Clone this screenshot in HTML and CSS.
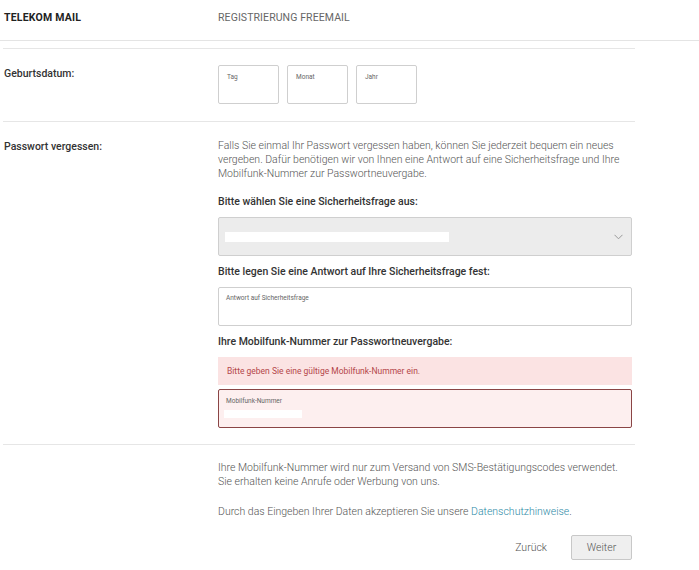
FILE: index.html
```html
<!DOCTYPE html>
<html lang="de">
<head>
<meta charset="utf-8">
<title>Registrierung Freemail</title>
<link rel="stylesheet" href="styles.css">
</head>
<body>
<header class="topbar">
  <div class="brand">TELEKOM MAIL</div>
  <div class="pagetitle">REGISTRIERUNG FREEMAIL</div>
</header>
<main class="form">
  <section class="row row-date">
    <div class="label">Geburtsdatum:</div>
    <div class="field">
      <div class="dates">
        <div class="box date"><span class="ph">Tag</span></div>
        <div class="box date"><span class="ph">Monat</span></div>
        <div class="box date"><span class="ph">Jahr</span></div>
      </div>
    </div>
  </section>
  <section class="row row-pw">
    <div class="label">Passwort vergessen:</div>
    <div class="field">
      <p class="intro">Falls Sie einmal Ihr Passwort vergessen haben, können Sie jederzeit bequem ein neues vergeben. Dafür benötigen wir von Ihnen eine Antwort auf eine Sicherheitsfrage und Ihre Mobilfunk-Nummer zur Passwortneuvergabe.</p>
      <h3 class="qlabel q1">Bitte wählen Sie eine Sicherheitsfrage aus:</h3>
      <div class="box select">
        <span class="redact redact-q"></span>
        <svg class="chev" width="9" height="6" viewBox="0 0 9 6"><path d="M0.5 0.8 L4.5 4.8 L8.5 0.8" fill="none" stroke="#999" stroke-width="1"/></svg>
      </div>
      <h3 class="qlabel">Bitte legen Sie eine Antwort auf Ihre Sicherheitsfrage fest:</h3>
      <div class="box input"><span class="ph">Antwort auf Sicherheitsfrage</span></div>
      <h3 class="qlabel">Ihre Mobilfunk-Nummer zur Passwortneuvergabe:</h3>
      <div class="error">Bitte geben Sie eine gültige Mobilfunk-Nummer ein.</div>
      <div class="box input invalid"><span class="ph">Mobilfunk-Nummer</span><span class="redact redact-num"></span></div>
    </div>
  </section>
  <section class="row row-foot">
    <div class="label"></div>
    <div class="field">
      <p class="note">Ihre Mobilfunk-Nummer wird nur zum Versand von SMS-Bestätigungscodes verwendet. Sie erhalten keine Anrufe oder Werbung von uns.</p>
      <p class="note privacy">Durch das Eingeben Ihrer Daten akzeptieren Sie unsere <a href="#">Datenschutzhinweise</a>.</p>
      <div class="actions">
        <button class="btn-link" type="button">Zurück</button>
        <button class="btn" type="button">Weiter</button>
      </div>
    </div>
  </section>
</main>
</body>
</html>
```
FILE: styles.css
```css
* { box-sizing: border-box; }
html, body { margin: 0; padding: 0; background: #fff; }
body {
  font-family: Roboto, "Liberation Sans", Arial, sans-serif;
  color: #333;
  width: 699px;
}
.topbar {
  display: grid;
  grid-template-columns: 218px 1fr;
  height: 41px;
  border-bottom: 1px solid #e4e4e4;
  align-items: start;
  padding-top: 11px;
}
.brand {
  padding-left: 4px;
  font-size: 10.5px;
  font-weight: 700;
  letter-spacing: 0.2px;
  color: #222;
}
.pagetitle {
  font-size: 10.5px;
  color: #666;
  letter-spacing: 0.1px;
}
.form {
  width: 632px;
  margin-left: 3px;
  margin-top: 7px;
}
.row {
  display: grid;
  grid-template-columns: 215px 414px;
  border-top: 1px solid #e6e6e6;
}
.label {
  padding-left: 1px;
  font-size: 10.5px;
  color: #333;
  font-weight: 500;
}
.row-date { padding: 16px 0 17px; }
.row-date .label { padding-top: 2px; }
.dates { display: flex; gap: 8px; }
.box {
  border: 1px solid #cfcfcf;
  border-radius: 2px;
  background: #fff;
  position: relative;
}
.date { width: 61px; height: 39px; padding: 7px 8px; }
.ph {
  display: block;
  font-size: 6.5px;
  color: #666;
  line-height: 8px;
}
.row-pw { padding: 17px 0 16px; }
.row-pw .label { padding-top: 1px; }
.intro {
  margin: 0;
  font-size: 10.5px;
  line-height: 14px;
  color: #555;
  font-weight: 300;
}
.qlabel {
  margin: 0;
  font-size: 10.5px;
  font-weight: 500;
  color: #333;
  line-height: 14px;
  padding: 9px 0 8px;
}
.q1 { padding-top: 14px; }
.select {
  height: 39px;
  background: #ececec;
  display: flex;
  align-items: center;
  justify-content: space-between;
  padding: 0 8px 0 6px;
}
.redact { display: block; background: #fff; }
.redact-q { width: 224px; height: 10px; }
.input { height: 39px; padding: 6px 7px; }
.error {
  height: 28px;
  background: #fbe3e3;
  color: #b4464a;
  font-size: 8.5px;
  padding: 9px 9px;
  margin-bottom: 4px;
}
.invalid {
  background: #fdefef;
  border-color: #8a4545;
  padding: 7px 7px;
}
.redact-num { width: 78px; height: 8px; margin-top: 5px; margin-left: -2px; }
.row-foot { padding: 16px 0 0; }
.note {
  margin: 0;
  font-size: 10.5px;
  line-height: 14px;
  color: #555;
  font-weight: 300;
}
.privacy { margin-top: 16px; }
.privacy a { color: #2a8aa6; text-decoration: none; }
.actions {
  display: flex;
  justify-content: flex-end;
  align-items: center;
  gap: 24px;
  margin-top: 16px;
}
.btn-link {
  background: none;
  border: 0;
  padding: 0;
  font-family: inherit;
  font-size: 10.5px;
  font-weight: 300;
  color: #555;
}
.btn {
  width: 61px;
  height: 25px;
  border: 1px solid #c8c8c8;
  border-radius: 2px;
  background: #efefef;
  font-family: inherit;
  font-size: 10.5px;
  font-weight: 300;
  color: #555;
}
```
